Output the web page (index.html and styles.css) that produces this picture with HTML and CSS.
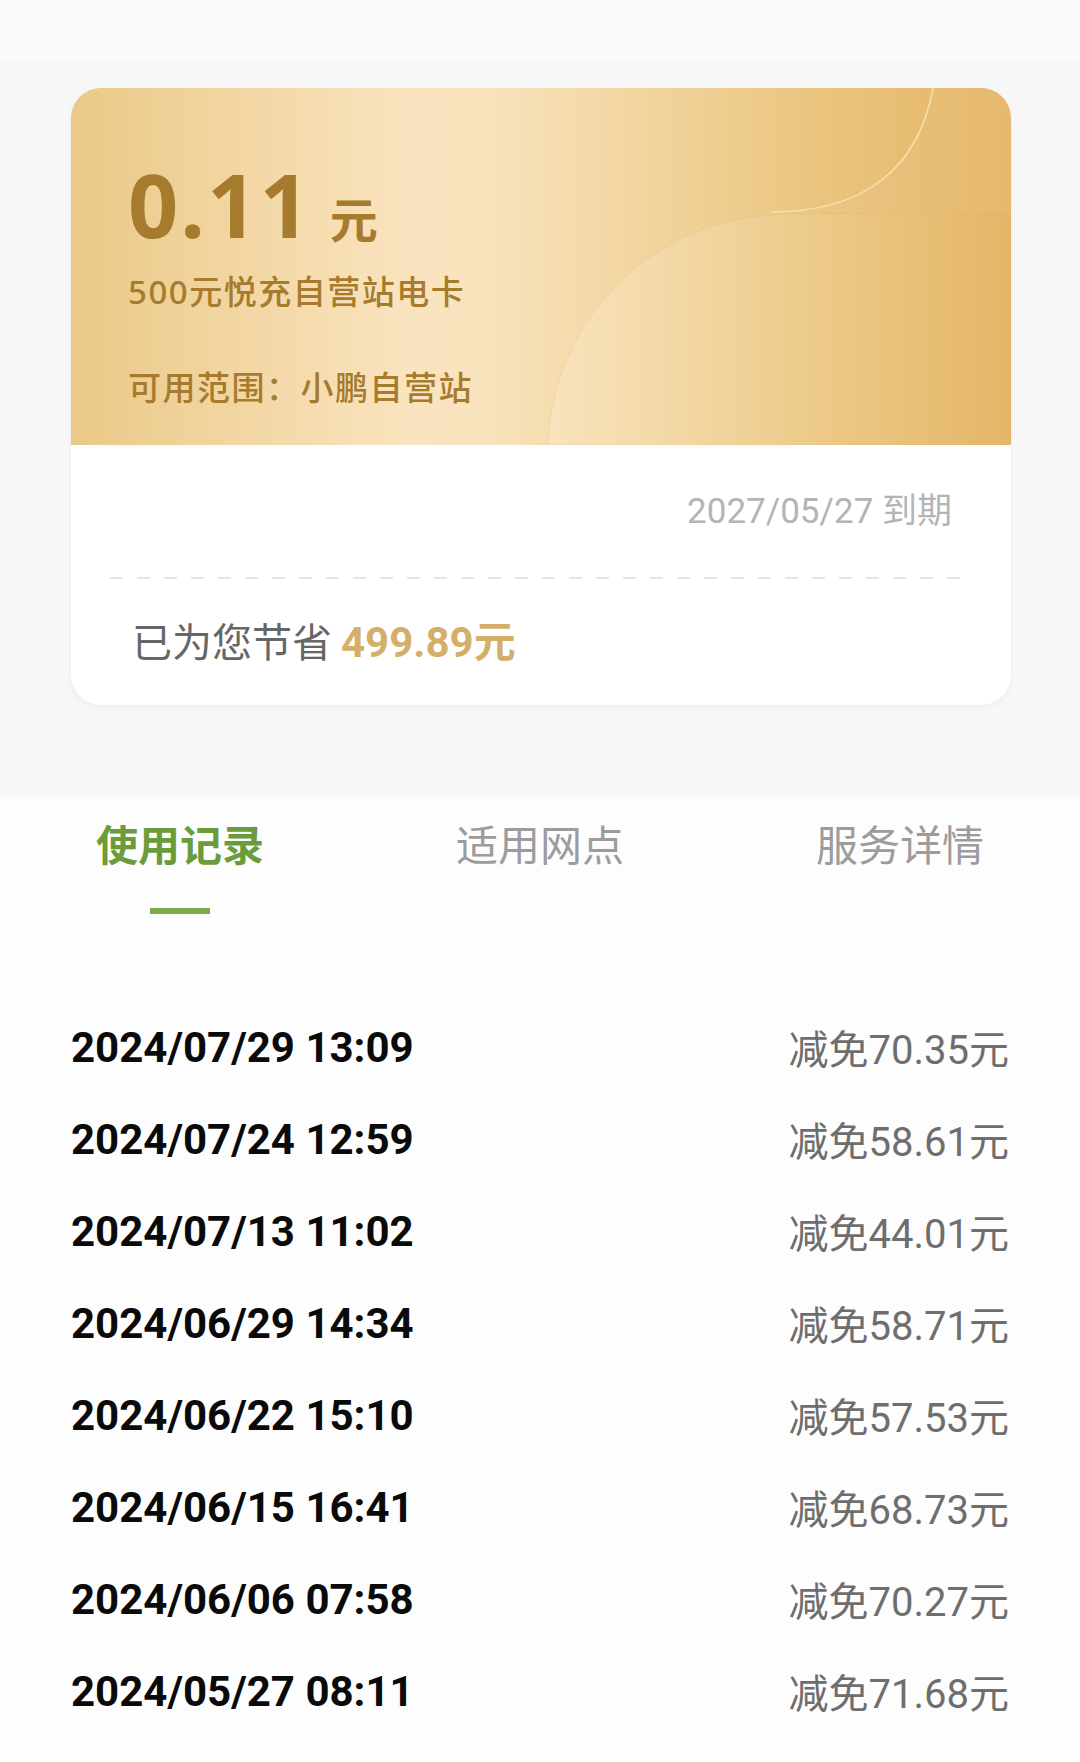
FILE: index.html
```html
<!DOCTYPE html>
<html lang="zh-CN">
<head>
  <meta charset="UTF-8">
  <meta name="viewport" content="width=device-width, initial-scale=1.0">
  <title>电卡详情</title>
  <link rel="stylesheet" href="styles.css">
</head>
<body>
  <div class="page">
    <div class="topbar"></div>

    <section class="summary">
      <div class="card">
        <div class="card-top">
          <!-- background waves of the gold card -->
          <svg class="card-deco" viewBox="0 0 940 357" preserveAspectRatio="none">
            <defs>
              <linearGradient id="waveLow" x1="0" y1="0" x2="1" y2="0">
                <stop offset="0" stop-color="#fff3dc" stop-opacity="0.25"/>
                <stop offset="1" stop-color="#fff3dc" stop-opacity="0"/>
              </linearGradient>
            </defs>
            <path d="M862 0 C848 78 796 124 700 124 L940 124 L940 0 Z" fill="#fff6e0" fill-opacity="0.06"/>
            <path d="M862 0 C848 78 796 124 700 124" fill="none" stroke="#f8e1ae" stroke-width="1.5"/>
            <path d="M940 126 L720 126 C585 126 482 228 477 357 L940 357 Z" fill="url(#waveLow)" stroke="#e2bd7c" stroke-opacity="0.3" stroke-width="1"/>
          </svg>

          <div class="balance">
            <span class="balance-num">0.11</span>
            <span class="balance-unit">元</span>
          </div>
          <div class="card-name">500元悦充自营站电卡</div>
          <div class="card-scope">可用范围：小鹏自营站</div>
        </div>

        <div class="card-bottom">
          <div class="expire">2027/05/27 到期</div>
          <div class="dash"></div>
          <div class="saved">已为您节省 <b>499.89元</b></div>
        </div>
      </div>
    </section>

    <section class="records">
      <div class="tabs">
        <div class="tab active">使用记录<i></i></div>
        <div class="tab">适用网点</div>
        <div class="tab">服务详情</div>
      </div>

      <ul class="record-list">
        <li><span class="time">2024/07/29 13:09</span><span class="off">减免70.35元</span></li>
        <li><span class="time">2024/07/24 12:59</span><span class="off">减免58.61元</span></li>
        <li><span class="time">2024/07/13 11:02</span><span class="off">减免44.01元</span></li>
        <li><span class="time">2024/06/29 14:34</span><span class="off">减免58.71元</span></li>
        <li><span class="time">2024/06/22 15:10</span><span class="off">减免57.53元</span></li>
        <li><span class="time">2024/06/15 16:41</span><span class="off">减免68.73元</span></li>
        <li><span class="time">2024/06/06 07:58</span><span class="off">减免70.27元</span></li>
        <li><span class="time">2024/05/27 08:11</span><span class="off">减免71.68元</span></li>
      </ul>
    </section>
  </div>
</body>
</html>
```

FILE: styles.css
```css
body {
  margin: 0;
  padding: 0;
  background-color: #fdfdfd;
  font-family: "Noto Sans", "Noto Sans CJK SC", sans-serif;
}

.page {
  width: 1080px;
  min-height: 1762px;
}

.topbar {
  height: 62px;
  background-color: #fafafa;
}

.summary {
  padding: 26px 0 92px 71px;
  background-color: #f7f7f8;
}

.card {
  width: 940px;
  border-radius: 30px;
  overflow: hidden;
  background-color: #fff;
  box-shadow: 0 2px 4px rgba(180, 185, 205, 0.18);
}

.card-top {
  position: relative;
  height: 357px;
  box-sizing: border-box;
  padding: 72px 0 0 57px;
  background: linear-gradient(90deg, #eac887 0%, #f3d8a6 20%, #fae4bf 36%, #f9e3bd 44%, #f1d49d 62%, #eac47d 80%, #e4b567 100%);
  color: #a67b2d;
}

.card-deco {
  position: absolute;
  left: 0;
  top: 0;
  width: 100%;
  height: 100%;
}

.balance {
  position: relative;
  display: flex;
  align-items: baseline;
  height: 88px;
}

.balance-num {
  font-size: 88px;
  line-height: 88px;
  font-weight: 700;
  letter-spacing: 2px;
}

.balance-unit {
  margin-left: 18px;
  font-family: "Noto Sans CJK SC", sans-serif;
  font-size: 48px;
  font-weight: 700;
}

.card-name,
.card-scope {
  position: relative;
  font-size: 33px;
  font-weight: 500;
  line-height: 40px;
  letter-spacing: 1.5px;
}

.card-name {
  margin-top: 24px;
}

.card-scope {
  margin-top: 56px;
}

.card-bottom {
  height: 260px;
  box-sizing: border-box;
  padding-top: 47px;
}

.expire {
  padding-right: 59px;
  text-align: right;
  font-family: Roboto, "Noto Sans CJK SC", sans-serif;
  font-size: 35px;
  line-height: 40px;
  color: #b4b4b4;
}

.dash {
  height: 2px;
  margin: 45px 38px 0 39px;
  background: repeating-linear-gradient(90deg, #e6e6e6 0 13px, transparent 13px 27px);
}

.saved {
  margin-top: 36px;
  padding-left: 61px;
  font-family: "Noto Sans CJK SC", sans-serif;
  font-size: 40px;
  line-height: 50px;
  color: #666;
}

.saved b {
  font-family: Roboto, "Noto Sans CJK SC", sans-serif;
  font-size: 42px;
  color: #d3af6a;
}

.records {
  background-color: #fdfdfd;
}

.tabs {
  display: grid;
  grid-template-columns: repeat(3, 1fr);
  padding-top: 18px;
}

.tab {
  display: flex;
  flex-direction: column;
  align-items: center;
  font-family: "Noto Sans CJK SC", sans-serif;
  font-size: 42px;
  line-height: 56px;
  color: #9c9c9c;
}

.tab.active {
  font-weight: 700;
  color: #6a9c3b;
}

.tab i {
  display: block;
  width: 60px;
  height: 6px;
  margin-top: 37px;
  background-color: #7aaa49;
}

.record-list {
  list-style: none;
  margin: 87px 0 0;
  padding: 0 71px;
}

.record-list li {
  display: flex;
  justify-content: space-between;
  align-items: center;
  height: 92px;
  font-family: Roboto, "Noto Sans CJK SC", sans-serif;
}

.time {
  font-size: 42px;
  font-weight: 700;
  color: #0a0a0a;
}

.off {
  font-size: 40px;
  color: #6e6e6e;
}
```
